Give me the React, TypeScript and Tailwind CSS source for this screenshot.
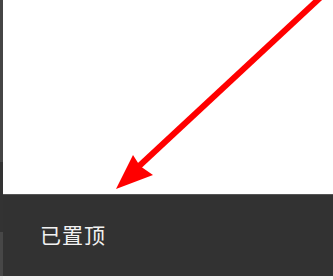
export default function App() {
    return (
        <div className="flex h-[280px] w-[333px] overflow-hidden bg-white font-['Noto_Sans_CJK_SC',sans-serif]">
            <div className="flex w-[3px] flex-col">
                <div className="h-[162px] bg-[#454545]" />
                <div className="h-[70px] bg-[#333333]" />
                <div className="h-[44px] bg-[#474747]" />
                <div className="flex-1 bg-[#e8e8e8]" />
            </div>
            <div className="relative flex flex-1 flex-col">
                <div className="h-[194px] bg-white" />
                <div className="flex h-[82px] items-center border-t border-[#555] bg-[#323232] pl-[37px]">
                    <span className="pb-[2px] text-[21px] leading-none tracking-[1px] text-[#f2f2f2]">已置顶</span>
                </div>
                <div className="flex-1 bg-[#f2f2f2]" />
                <svg
                    className="absolute left-[-3px] top-0"
                    width="333"
                    height="280"
                    viewBox="0 0 333 280"
                >
                    <line x1="322" y1="-4" x2="137" y2="168" stroke="#ff0000" strokeWidth="6" />
                    <polygon points="116,189 133,155 140,166 153,175" fill="#ff0000" />
                </svg>
            </div>
        </div>
    );
}
